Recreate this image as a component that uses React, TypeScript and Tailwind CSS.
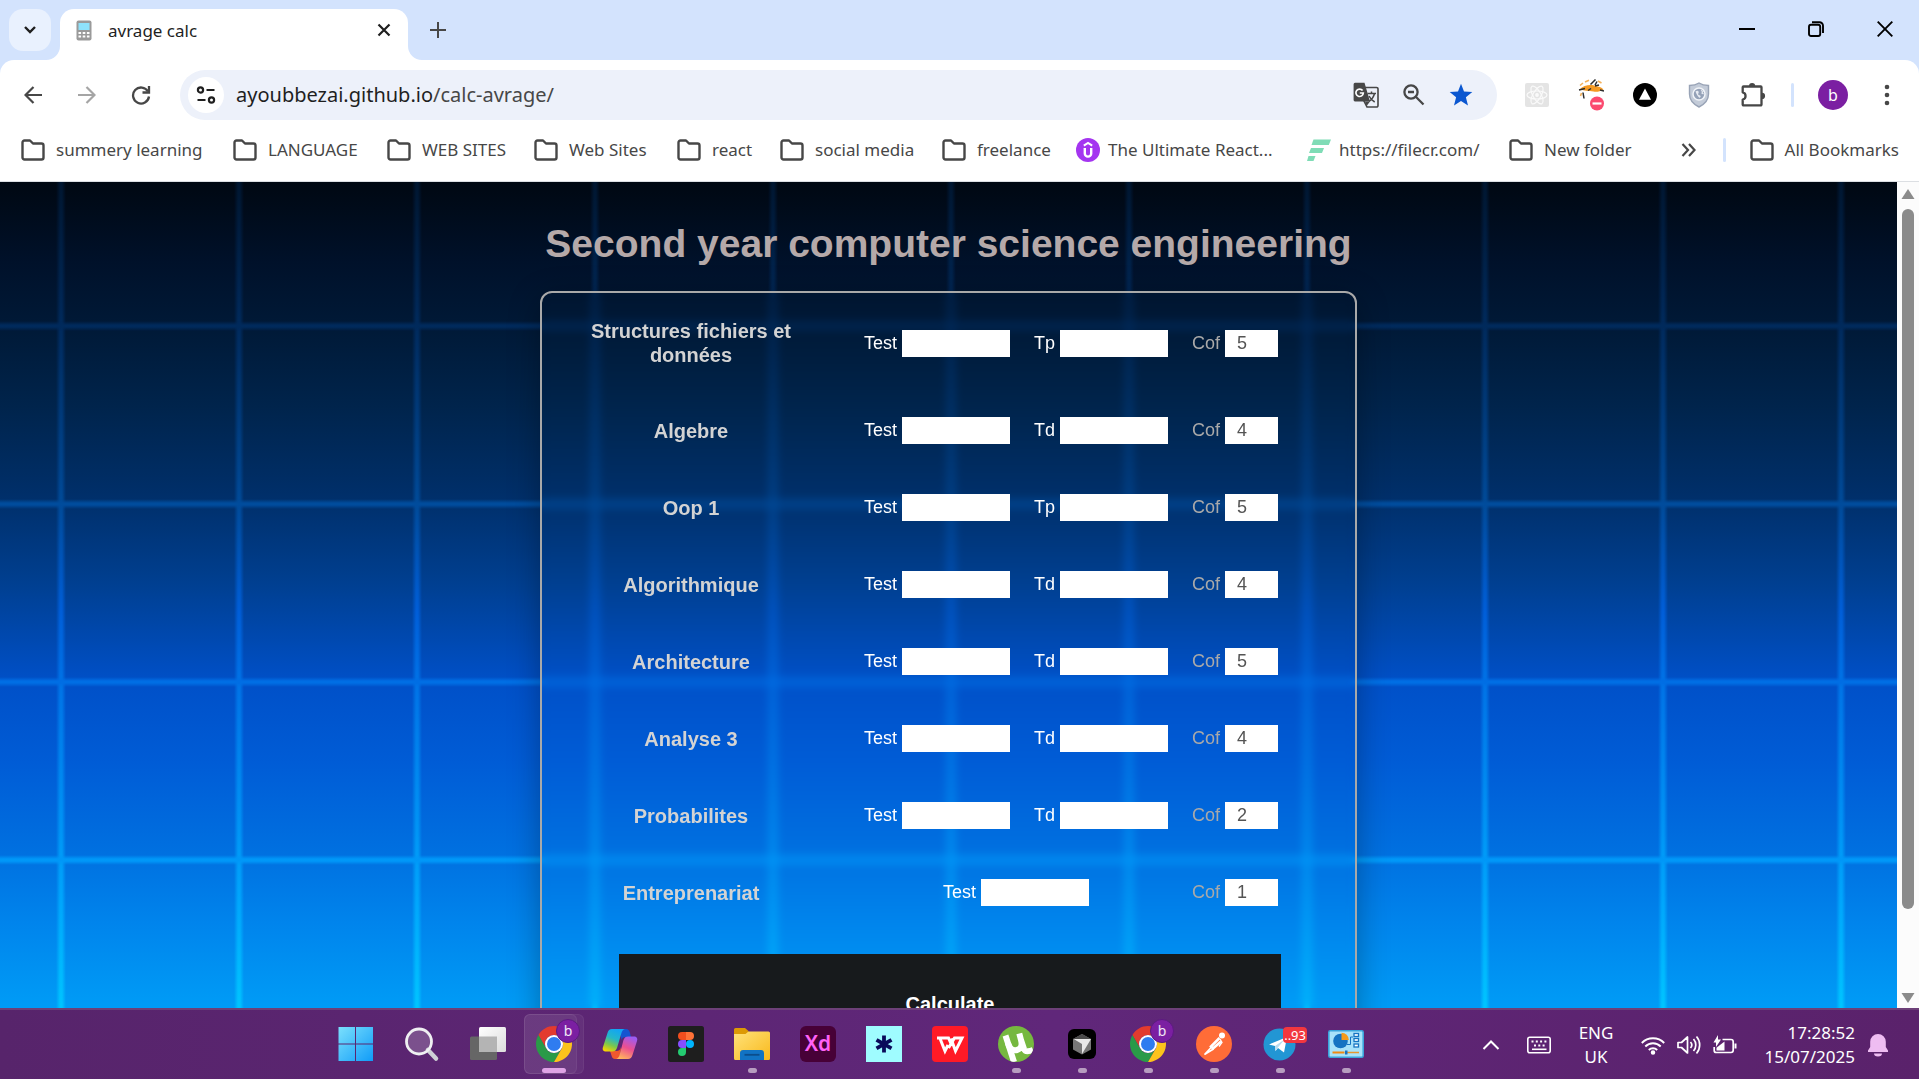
import type { ReactNode } from "react";

const chromeFont = "font-['Noto_Sans','Open_Sans',sans-serif]";

/* ---------- browser icons ---------- */

function Folder() {
  return (
    <svg viewBox="0 0 24 22" className="h-[22px] w-6 shrink-0" fill="none" stroke="#474747" strokeWidth="2.4" strokeLinejoin="round">
      <path d="M1.5 3.5a2 2 0 0 1 2-2H9l3 3h8.5a2 2 0 0 1 2 2v12a2 2 0 0 1-2 2h-17a2 2 0 0 1-2-2z" />
    </svg>
  );
}

function Uplift() {
  return (
    <svg viewBox="0 0 24 24" className="size-6 shrink-0">
      <circle cx="12" cy="12" r="12" fill="#a435f0" />
      <path d="M7.8 7.6 12 4.9l4.2 2.7" fill="none" stroke="#fff" strokeWidth="2" />
      <path d="M8.8 10v5.4a3.2 3.2 0 0 0 6.4 0V10" fill="none" stroke="#fff" strokeWidth="2.4" />
    </svg>
  );
}

function FilecrMark() {
  return (
    <svg viewBox="0 0 24 24" className="size-6 shrink-0" fill="#7fdcb6">
      <path d="M6.5 1.5H24l-2.200 5.500H4.500z" />
      <path d="M4 10h13l-2 5H2z" />
      <path d="M1.500 18H8.500l-2 5H0z" />
    </svg>
  );
}

function Translate() {
  return (
    <svg viewBox="0 0 26 26" className="size-[26px]">
      <path d="M11 5.500h12.500a1.500 1.500 0 0 1 1.500 1.500v16.500a1.500 1.500 0 0 1-1.500 1.500H14l-3-6z" fill="#edf1fa" stroke="#474747" strokeWidth="1.600" />
      <path d="M2 .8h9.500L17 19.500H2A1.500 1.500 0 0 1 .6 18V2.200A1.500 1.500 0 0 1 2 .8z" fill="#474747" />
      <path d="M12 19.500h5l-3.400 4.500z" fill="#474747" />
      <path d="M9.600 8.600A3.700 3.700 0 1 0 10.300 11H6.800" fill="none" stroke="#fff" strokeWidth="1.700" />
      <path d="M14.500 11.500h8.500M18.500 9.500v2M21.500 11.500c-.8 3.500-3 6.200-5.500 7.800M16 14c1.300 2.600 3.300 4.500 5.700 6" fill="none" stroke="#474747" strokeWidth="1.500" />
    </svg>
  );
}

function ZoomOut() {
  return (
    <svg viewBox="0 0 24 24" className="size-6" fill="none" stroke="#474747" strokeWidth="2.300">
      <circle cx="9" cy="9" r="6.600" />
      <path d="m13.800 13.800 7.700 7.700M6 9h6" />
    </svg>
  );
}

function Star() {
  return (
    <svg viewBox="0 0 24 24" className="size-6" fill="#0b57d0">
      <path d="m12 .8 3 7.700 8.300.5-6.400 5.300 2.100 8.100L12 17.900l-7 4.500 2.100-8.100L.7 9 9 8.500z" />
    </svg>
  );
}

function ReactBadge() {
  return (
    <svg viewBox="0 0 24 24" className="size-6">
      <rect width="24" height="24" rx="2" fill="#e4e4e4" />
      <g fill="none" stroke="#fafafa" strokeWidth="1.200">
        <ellipse cx="12" cy="12" rx="10" ry="4" />
        <ellipse cx="12" cy="12" rx="10" ry="4" transform="rotate(60 12 12)" />
        <ellipse cx="12" cy="12" rx="10" ry="4" transform="rotate(120 12 12)" />
      </g>
      <circle cx="12" cy="12" r="1.900" fill="#fafafa" />
    </svg>
  );
}

function BeeBlocker() {
  return (
    <svg viewBox="0 0 26 32" className="h-8 w-[26px]">
      <path d="M1.500 10.500c4-4.500 12-5.500 16-3.500 3 .5 6 1 8 3.500-4 2.500-7.500 2.500-10 2-5-.5-9-1-14-2z" fill="#f59a23" />
      <path d="M2 6.500 5 4M7 3l4-1.700M3.500 14l-1 3M20 2l3.500 2" stroke="#f3b15c" strokeWidth="1.600" />
      <path d="m12.500 5.500 5-5M17 6l2-3.500M1 11l6-1.500M10 11.500l3-2M5 13.500l1 6M17 7l4-1M22 11l4 1" stroke="#2d2d2d" strokeWidth="1.500" />
      <circle cx="19" cy="24.500" r="7" fill="#fb4a6f" />
      <path d="M14.500 24.500h9" stroke="#fff" strokeWidth="2.200" />
    </svg>
  );
}

function TriangleDisc() {
  return (
    <svg viewBox="0 0 24 24" className="size-6">
      <circle cx="12" cy="12" r="12" fill="#000" />
      <path d="M12 5.500 18 16.800H6z" fill="#fff" />
    </svg>
  );
}

function ShieldGlobe() {
  return (
    <svg viewBox="0 0 22 26" className="h-[26px] w-[22px]">
      <path d="M11 1C14 3 17 3.500 20.500 3.500V12c0 6-3.500 10-9.500 13C5 22 1.500 18 1.500 12V3.500C5 3.500 8 3 11 1z" fill="#c3cbd8" stroke="#98a3b6" strokeWidth="1.400" />
      <circle cx="11" cy="12" r="6" fill="#95a2b8" stroke="#f1f4f8" strokeWidth="1.500" />
      <path d="M7.500 9.500c2-2 4 0 3 1.500s0 2 1.500 2.500 0 3-1 2-2.500-3-3.500-6z" fill="#e7ebf2" />
      <path d="M13 8.500l2 1-1 1.500 1.500 1" stroke="#e7ebf2" strokeWidth="1.300" fill="none" />
    </svg>
  );
}

function Puzzle() {
  return (
    <svg viewBox="0 0 26 26" className="size-[26px]">
      <path d="M3.500 4.500h17.200a.8.8 0 0 1 .8.8v17.200a.8.800 0 0 1-.8.8H3.500a.8.8 0 0 1-.8-.8V17.500a3.700 3.700 0 0 0 0-7.200V5.300a.8.800 0 0 1 .8-.8z" fill="none" stroke="#474747" strokeWidth="2.300" strokeLinejoin="round" />
      <path d="M9 4a3.100 3.100 0 0 1 6.200 0zM22 10.800a3.100 3.100 0 0 1 0 6.200z" fill="#474747" />
    </svg>
  );
}

function CalculatorIcon() {
  return (
    <svg viewBox="0 0 16 21" className="h-[21px] w-4">
      <rect x=".5" y=".5" width="15" height="20" rx="2" fill="#9a9a9a" />
      <rect x="2.500" y="3" width="11" height="7" fill="#8ee2fb" />
      <g fill="#fff">
        <rect x="2.500" y="12" width="2.600" height="2" />
        <rect x="6.700" y="12" width="2.600" height="2" />
        <rect x="10.900" y="12" width="2.600" height="2" />
        <rect x="2.500" y="15.500" width="2.600" height="2" />
        <rect x="6.700" y="15.500" width="2.600" height="2" />
        <rect x="10.900" y="15.500" width="2.600" height="2" />
      </g>
    </svg>
  );
}

/* ---------- browser chrome ---------- */

function TabStrip() {
  return (
    <div className="flex h-[60px] items-end bg-[#d3e3fd] pl-[9px]">
      <button aria-label="Search tabs" className="mb-[9px] flex size-[42px] items-center justify-center rounded-[14px] bg-[#e9f1fe]">
        <svg viewBox="0 0 14 10" className="h-[10px] w-[14px]" fill="none" stroke="#1f1f1f" strokeWidth="2.400">
          <path d="m2 2 5 5 5-5" />
        </svg>
      </button>
      <div className="relative ml-[9px] flex h-[51px] w-[348px] items-center rounded-t-[14px] bg-white pr-3 pb-[9px] pl-4">
        <svg viewBox="0 0 14 14" className="absolute bottom-0 -left-[14px] size-[14px]" fill="#fff">
          <path d="M14 0v14H0A14 14 0 0 0 14 0z" />
        </svg>
        <svg viewBox="0 0 14 14" className="absolute -right-[14px] bottom-0 size-[14px]" fill="#fff">
          <path d="M0 0v14h14A14 14 0 0 1 0 0z" />
        </svg>
        <CalculatorIcon />
        <span className="ml-4 flex-1 pt-[2px] text-[17px] leading-6 text-[#1f1f1f]">avrage calc</span>
        <button aria-label="Close tab" className="flex size-6 items-center justify-center">
          <svg viewBox="0 0 14 14" className="size-[14px]" stroke="#1f1f1f" strokeWidth="2.200">
            <path d="m1.500 1.500 11 11m0-11-11 11" />
          </svg>
        </button>
      </div>
      <button aria-label="New tab" className="mb-[18px] ml-[18px] flex size-6 items-center justify-center">
        <svg viewBox="0 0 16 16" className="size-4" stroke="#474747" strokeWidth="2">
          <path d="M8 0v16M0 8h16" />
        </svg>
      </button>
      <div className="ml-auto flex self-start">
        <button aria-label="Minimize" className="flex h-[58px] w-[69px] items-center justify-center">
          <svg viewBox="0 0 16 16" className="size-4" stroke="#000" strokeWidth="2"><path d="M0 8h16" /></svg>
        </button>
        <button aria-label="Restore" className="flex h-[58px] w-[69px] items-center justify-center">
          <svg viewBox="0 0 16 16" className="size-4" fill="none" stroke="#000" strokeWidth="1.900">
            <rect x="1" y="3.800" width="11.200" height="11.200" rx="2" />
            <path d="M4 1.200h7.500a3.500 3.500 0 0 1 3.500 3.500V12" />
          </svg>
        </button>
        <button aria-label="Close" className="flex h-[58px] w-[69px] items-center justify-center">
          <svg viewBox="0 0 16 16" className="size-4" stroke="#000" strokeWidth="1.900"><path d="m.7.700 14.600 14.600m0-14.600L.7 15.300" /></svg>
        </button>
      </div>
    </div>
  );
}

const extensions: { name: string; icon: ReactNode }[] = [
  { name: "React Developer Tools", icon: <ReactBadge /> },
  { name: "Blocker", icon: <BeeBlocker /> },
  { name: "Toolbar", icon: <TriangleDisc /> },
  { name: "Guard", icon: <ShieldGlobe /> },
  { name: "Extensions", icon: <Puzzle /> },
];

function Toolbar() {
  return (
    <div className="bg-[#d3e3fd]">
      <div className="flex h-[68px] items-center rounded-t-[14px] bg-white pt-[2px] pl-[6px]">
        <button aria-label="Back" className="flex h-10 w-[54px] items-center justify-center">
          <svg viewBox="0 0 18 18" className="size-[18px]" fill="none" stroke="#474747" strokeWidth="2.200"><path d="M18 9H2M9.500 1 1.500 9l8 8" /></svg>
        </button>
        <button aria-label="Forward" disabled className="flex h-10 w-[54px] items-center justify-center">
          <svg viewBox="0 0 18 18" className="size-[18px]" fill="none" stroke="#a5a5a5" strokeWidth="2.200"><path d="M0 9h16M8.500 1l8 8-8 8" /></svg>
        </button>
        <button aria-label="Reload" className="flex h-10 w-[54px] items-center justify-center">
          <svg viewBox="0 0 20 20" className="size-5" fill="none" stroke="#474747" strokeWidth="2.300">
            <path d="M17 6.500A8 8 0 1 0 18 11.500" /><path d="M18 1v6.500h-6.500" />
          </svg>
        </button>
        <div className="ml-3 flex h-[50px] flex-1 items-center rounded-full bg-[#edf1fa] pr-6 pl-2">
          <button aria-label="View site information" className="flex size-9 shrink-0 items-center justify-center rounded-full bg-white">
            <svg viewBox="0 0 20 20" className="size-5" fill="none" stroke="#1f1f1f" strokeWidth="2.200">
              <circle cx="4.500" cy="5" r="2.600" /><path d="M10.500 5H18.500M1.500 15h8" /><circle cx="15.500" cy="15" r="2.600" />
            </svg>
          </button>
          <a href="#top" className="ml-3 flex-1 text-xl leading-6 text-[#1f1f1f]">
            ayoubbezai.github.io<span className="text-[#474747]">/calc-avrage/</span>
          </a>
          <div className="flex items-center gap-[23px]">
            <button aria-label="Translate"><Translate /></button>
            <button aria-label="Zoom"><ZoomOut /></button>
            <button aria-label="Bookmark"><Star /></button>
          </div>
        </div>
        <div className="ml-[13px] flex items-center">
          {extensions.map((e) => (
            <button key={e.name} aria-label={e.name} className="flex h-10 w-[54px] items-center justify-center">{e.icon}</button>
          ))}
        </div>
        <span className="ml-[11px] h-6 w-[3px] rounded bg-[#d3e3fd]" />
        <button aria-label="Profile" className="ml-6 flex size-[30px] items-center justify-center rounded-full bg-[#7b1fa2] text-base text-white">b</button>
        <button aria-label="Menu" className="mr-5 ml-[27px] flex h-10 w-6 items-center justify-center">
          <svg viewBox="0 0 6 22" className="h-[22px] w-[6px]" fill="#474747">
            <circle cx="3" cy="3" r="2.300" /><circle cx="3" cy="11" r="2.300" /><circle cx="3" cy="19" r="2.300" />
          </svg>
        </button>
      </div>
    </div>
  );
}

function Bookmark({ label, icon }: { label: string; icon?: ReactNode }) {
  return (
    <a href="#top" className={icon ? "flex items-center gap-2 whitespace-nowrap" : "flex items-center gap-[11px] whitespace-nowrap"}>
      {icon ?? <Folder />}
      <span>{label}</span>
    </a>
  );
}

function BookmarksBar() {
  return (
    <nav className="grid h-[54px] grid-cols-[212px_154px_147px_143px_103px_162px_134px_231px_202px_172px_1fr_auto] items-center border-b border-[#dcdfe3] bg-white pr-5 pb-[10px] pl-[21px] text-[17px] text-[#474747]">
      <Bookmark label="summery learning" />
      <Bookmark label="LANGUAGE" />
      <Bookmark label="WEB SITES" />
      <Bookmark label="Web Sites" />
      <Bookmark label="react" />
      <Bookmark label="social media" />
      <Bookmark label="freelance" />
      <Bookmark label="The Ultimate React..." icon={<Uplift />} />
      <Bookmark label="https://filecr.com/" icon={<FilecrMark />} />
      <Bookmark label="New folder" />
      <button aria-label="More bookmarks">
        <svg viewBox="0 0 15 14" className="h-[14px] w-[15px]" fill="none" stroke="#474747" strokeWidth="2.200">
          <path d="m1.500 1 5.500 6-5.500 6M8 1l5.500 6L8 13" />
        </svg>
      </button>
      <div className="flex items-center gap-6">
        <span className="h-6 w-[3px] rounded bg-[#d3e3fd]" />
        <Bookmark label="All Bookmarks" />
      </div>
    </nav>
  );
}

/* ---------- page ---------- */

const subjects = [
  { name: "Structures fichiers et données", fields: ["Test", "Tp"], cof: 5 },
  { name: "Algebre", fields: ["Test", "Td"], cof: 4 },
  { name: "Oop 1", fields: ["Test", "Tp"], cof: 5 },
  { name: "Algorithmique", fields: ["Test", "Td"], cof: 4 },
  { name: "Architecture", fields: ["Test", "Td"], cof: 5 },
  { name: "Analyse 3", fields: ["Test", "Td"], cof: 4 },
  { name: "Probabilites", fields: ["Test", "Td"], cof: 2 },
  { name: "Entreprenariat", fields: ["Test"], cof: 1 },
];

function GridBackdrop() {
  return (
    <div className="absolute inset-0 bg-[linear-gradient(180deg,#000812_0px,#00112a_80px,#001a38_150px,#00244c_225px,#00306c_320px,#003f90_400px,#0050c8_500px,#005cd6_580px,#0070e0_670px,#0084ec_740px,#009cf6_826px)]">
      <div className="absolute inset-0 bg-[linear-gradient(180deg,#001630_0px,#002a5c_145px,#004a98_322px,#005ed8_430px,#0072e6_500px,#0092f4_640px,#00a6fc_720px,#00c4ff_826px)] [mask-image:repeating-linear-gradient(90deg,transparent_0px,transparent_56px,#000_60px,#000_62px,transparent_66px,transparent_178px)]" />
      <div className="absolute inset-0 bg-[linear-gradient(180deg,#001630_0px,#002a5c_145px,#004c9c_322px,#005ed8_430px,#006ee4_500px,#0098f8_680px,#00c4ff_826px)] [mask-image:repeating-linear-gradient(180deg,transparent_0px,transparent_139px,#000_143px,#000_145px,transparent_149px,transparent_178px)]" />
    </div>
  );
}

function SubjectRow({ subject }: { subject: (typeof subjects)[number] }) {
  return (
    <div className="grid grid-cols-[298px_352px_86px] items-center py-[25px] text-lg leading-[27px] text-white">
      <h2 className="mx-auto max-w-[220px] text-center text-xl leading-6 font-bold text-[#d3d3d3]">{subject.name}</h2>
      <div className="flex justify-center gap-6">
        {subject.fields.map((f) => (
          <label key={f} className="flex items-center gap-[5px]">
            {f}
            <input type="text" inputMode="decimal" className="h-[27px] w-[108px] bg-white px-3 text-[#545454]" />
          </label>
        ))}
      </div>
      <label className="flex items-center gap-[5px] text-[#a9a9a9]">
        Cof
        <input type="text" readOnly defaultValue={subject.cof} className="h-[27px] w-[53px] bg-white pl-3 text-[#545454]" />
      </label>
    </div>
  );
}

function Page() {
  return (
    <div id="top" className="flex min-h-0 flex-1 bg-[#fcfcfc] font-['Liberation_Sans',Arial,sans-serif]">
      <main className="relative flex-1 overflow-hidden">
        <GridBackdrop />
        <div className="relative flex flex-col items-center pt-[39px]">
          <h1 className="mb-6 text-[39px] leading-[46px] font-bold text-[#b5a9a9]">Second year computer science engineering</h1>
          <form className="w-full max-w-[817px] rounded-xl border-2 border-[#a9a9a9] pt-px shadow-[0_8px_32px_rgba(0,0,0,0.3)] backdrop-blur-[5px]">
            {subjects.map((s) => (
              <SubjectRow key={s.name} subject={s} />
            ))}
            <button type="button" className="mt-[23px] mb-12 ml-[77px] h-[100px] w-[662px] bg-[#171a1c] text-xl font-bold text-white">Calculate</button>
          </form>
        </div>
      </main>
      <div className="flex w-[22px] flex-col items-center">
        <svg viewBox="0 0 14 27" className="h-[27px] w-[14px] shrink-0" fill="#8b8b8b"><path d="M7 7 13.500 17H.5z" /></svg>
        <div className="w-3 flex-[699] rounded-full bg-[#8b8b8b]" />
        <div className="flex-[72]" />
        <svg viewBox="0 0 14 27" className="h-[27px] w-[14px] shrink-0" fill="#8b8b8b"><path d="M7 22 .5 12h13z" /></svg>
      </div>
    </div>
  );
}

/* ---------- taskbar ---------- */

function Windows() {
  return (
    <svg viewBox="0 0 36 36" className="size-9">
      <defs>
        <linearGradient id="win" x1="0" y1="0" x2="1" y2="1"><stop offset="0" stopColor="#7be0fd" /><stop offset="1" stopColor="#109cf8" /></linearGradient>
      </defs>
      <path d="M.5 1H17v16.500H.5zM18 1h17v16.500H18zM.5 18.500H17V35H.5zM18 18.500h17V35H18z" fill="url(#win)" />
    </svg>
  );
}

function Search() {
  return (
    <svg viewBox="0 0 36 36" className="size-9" fill="none">
      <path d="m24 24 8 8.500" stroke="#cfd0d6" strokeWidth="4.500" strokeLinecap="round" />
      <circle cx="15" cy="15.500" r="12.500" fill="#fff" fillOpacity=".2" stroke="#efeff2" strokeWidth="2.800" />
    </svg>
  );
}

function TaskView() {
  return (
    <svg viewBox="0 0 36 36" className="size-9">
      <defs>
        <linearGradient id="tv" x1="0" y1="0" x2="1" y2="1"><stop offset="0" stopColor="#fff" /><stop offset="1" stopColor="#dcdcdc" /></linearGradient>
      </defs>
      <rect x="0" y="10.500" width="27" height="23.500" rx="1.500" fill="#666" />
      <rect x="9" y="1" width="27" height="25" rx="1.500" fill="url(#tv)" />
      <path d="M9 10.500h18V26H10.500A1.500 1.500 0 0 1 9 24.500z" fill="#b4b4b4" />
    </svg>
  );
}

function Chrome() {
  return (
    <span className="relative">
      <svg viewBox="0 0 48 48" className="size-9">
        <path d="M3.220 12A24 24 0 0 1 44.780 12H24A12 12 0 0 0 13.600 30z" fill="#e33b2e" />
        <path d="M3.220 12 13.600 30A12 12 0 0 0 34.400 30L24 48A24 24 0 0 1 3.220 12z" fill="#2a9a48" />
        <path d="M44.780 12A24 24 0 0 1 24 48L34.400 30A12 12 0 0 0 24 12z" fill="#fcc31c" />
        <circle cx="24" cy="24" r="12" fill="#fff" />
        <circle cx="24" cy="24" r="9.300" fill="#2f7cf0" />
      </svg>
      <span className="absolute -top-[7px] -right-[8px] flex size-6 items-center justify-center rounded-full border border-[#5c1a80] bg-[#7b1fa2] text-sm text-white/90">b</span>
    </span>
  );
}

function Copilot() {
  return (
    <svg viewBox="0 0 36 36" className="size-9">
      <defs>
        <linearGradient id="cpA" x1=".6" y1="0" x2=".2" y2="1"><stop offset="0" stopColor="#12a5f4" /><stop offset=".4" stopColor="#25b7c8" /><stop offset=".7" stopColor="#7cc84c" /><stop offset="1" stopColor="#fbd400" /></linearGradient>
        <linearGradient id="cpB" x1=".7" y1="0" x2=".3" y2="1"><stop offset="0" stopColor="#9a5cf5" /><stop offset=".5" stopColor="#ec4f8f" /><stop offset="1" stopColor="#ffb45e" /></linearGradient>
      </defs>
      <path d="M18 3h6c2.500 0 3.500 2 4 4l1 4h-5c-3 0-4 1-4.700 3z" fill="#1454d0" />
      <path d="M18 33h-5c-2 0-3-1.500-3.500-3.500L8 25h6c3 0 4-1 5-4z" fill="#f0582e" />
      <path d="M10 3h13c-2 .5-3 2-3.700 4.500L15 22c-1 2.500-2 3.500-5 3.500H4C1.500 25.500 0 24 1 21L5.500 7C6.300 4.500 7.500 3 10 3z" fill="url(#cpA)" />
      <path d="M26 33H14c2-.5 3-2 3.700-4.500L21.500 14c1-2.500 2-3.500 5-3.500H32c2.500 0 4 2 3 4.500L30.500 29c-.8 2.500-2 4-4.500 4z" fill="url(#cpB)" />
    </svg>
  );
}

function Figma() {
  return (
    <svg viewBox="0 0 36 36" className="size-9">
      <rect width="36" height="36" rx="2.500" fill="#1e1e1e" />
      <path d="M18 6h-4a4 4 0 0 0 0 8h4z" fill="#f24e1e" />
      <path d="M18 6h4a4 4 0 0 1 0 8h-4z" fill="#ff7237" />
      <path d="M18 14h-4a4 4 0 0 0 0 8h4z" fill="#874fff" />
      <circle cx="22" cy="18" r="4" fill="#00b6ff" />
      <path d="M18 22h-4a4 4 0 1 0 4 4z" fill="#24cb71" />
    </svg>
  );
}

function Explorer() {
  return (
    <svg viewBox="0 0 36 36" className="size-9">
      <defs>
        <linearGradient id="ex" x1="0" y1="0" x2="1" y2="1"><stop offset="0" stopColor="#ffe27a" /><stop offset="1" stopColor="#f9b91c" /></linearGradient>
      </defs>
      <path d="M0 3.500A1.500 1.500 0 0 1 1.500 2H11l3.500 3v5H0z" fill="#dd9a05" />
      <path d="M0 8h11.500l3-2.500H34.500A1.500 1.500 0 0 1 36 7v25.500A1.500 1.500 0 0 1 34.500 34h-33A1.500 1.500 0 0 1 0 32.500z" fill="url(#ex)" />
      <path d="M6 34v-7a3 3 0 0 1 3-3h18a3 3 0 0 1 3 3v7z" fill="#1173c4" />
      <path d="M10.500 28.800h15" stroke="#0b4d8c" strokeWidth="1.800" />
    </svg>
  );
}

function AdobeXd() {
  return <span className="flex size-9 items-center justify-center rounded-md bg-[#470137] text-[21px] font-semibold text-[#ff61f6]">Xd</span>;
}

function Asterisk() {
  return (
    <svg viewBox="0 0 36 36" className="size-9">
      <path d="M0 0h36v36H0z" fill="#9ffcff" />
      <path d="M18 9.500v17M10.500 13.800l15 8.600M25.500 13.800l-15 8.600" stroke="#0a0a5a" strokeWidth="3.800" />
    </svg>
  );
}

function Wps() {
  return (
    <svg viewBox="0 0 36 36" className="size-9">
      <rect width="36" height="36" rx="4" fill="#ff1a26" />
      <path d="M5 12h11.500l3.500 8M8 12.500l5 12.500 3-6M19 12.500l4.500 12.500 6.500-13h-7.500l-6 10" fill="none" stroke="#fff" strokeWidth="3" />
    </svg>
  );
}

function Torrent() {
  return (
    <svg viewBox="0 0 36 36" className="size-9">
      <defs>
        <clipPath id="torrentDisc"><circle cx="18" cy="18" r="18" /></clipPath>
      </defs>
      <circle cx="18" cy="18" r="18" fill="#76b83f" />
      <g clipPath="url(#torrentDisc)" fill="none" stroke="#fff" strokeWidth="6">
        <path d="M7.500 9.500 16 36" />
        <path d="M10 17c1.500 6 5 8 9 7s5.500-4.500 4-10l-1.700-6.500M23 14l3 9c1 2.500 4 3 9 1" />
      </g>
    </svg>
  );
}

function Cursor() {
  return (
    <svg viewBox="0 0 36 36" className="size-9">
      <rect x="4" y="3" width="28" height="30" rx="6" fill="#000" />
      <path d="m18 8 9 5v10.500L18 28.500 9 23.500V13z" fill="#777" />
      <path d="m18 8 9 5-9 4.500L9 13z" fill="#4a4a4a" />
      <path d="M9.500 13H27l-9 15v-10z" fill="#e8e8e8" />
    </svg>
  );
}

function Postman() {
  return (
    <svg viewBox="0 0 36 36" className="size-9" fill="none">
      <circle cx="18" cy="18" r="18" fill="#ff6c37" />
      <circle cx="26" cy="9.500" r="3" fill="#fff" />
      <path d="m23.500 12-8.500 8.500 2 2 8-7" stroke="#fff" strokeWidth="2.600" />
      <path d="m16 20.500-7.500 8 9-5.500" stroke="#fff" strokeWidth="1.600" />
      <path d="m24 13 2 3.500-3 4" stroke="#fff" strokeWidth="1.300" />
    </svg>
  );
}

function Telegram() {
  return (
    <span className="relative">
      <svg viewBox="0 0 36 36" className="size-9">
        <circle cx="17.500" cy="18.500" r="16" fill="#2296d4" />
        <path d="M7 18.500 25 11l-3 15.500-6-4.500-2.500 3-.5-5z" fill="#fff" />
        <path d="m13 20 9.500-6.500L15.500 22l-2 3z" fill="#b8dcf0" />
      </svg>
      <span className="absolute top-px -right-[9px] rounded bg-[#f2373f] px-px text-[13px] leading-4 text-white">..93</span>
    </span>
  );
}

function ControlPanel() {
  return (
    <svg viewBox="0 0 36 36" className="size-9">
      <rect x=".8" y="4.800" width="34.400" height="26.400" rx="1.500" fill="#a9e2fa" stroke="#3aa4dc" strokeWidth="1.600" />
      <circle cx="12.500" cy="15" r="7.300" fill="#1673c2" />
      <path d="M12.500 15V7.700A7.300 7.300 0 0 1 19.800 15z" fill="#f59a1b" transform="translate(1 -1)" />
      <g fill="#fff" stroke="#1673c2" strokeWidth="1.300"><rect x="26" y="7.500" width="4.500" height="3" /><rect x="26" y="12.500" width="4.500" height="3" /><rect x="26" y="18" width="4.500" height="3" /></g>
      <path d="M19 18.500h3.500V11H25" fill="none" stroke="#1673c2" />
      <path d="M4.500 26.500h12" stroke="#f08a12" strokeWidth="2" /><path d="M18 26.500h13" stroke="#e7962e" strokeWidth="1.500" />
      <rect x="17" y="24.500" width="2.500" height="4" fill="#1673c2" />
    </svg>
  );
}

const apps: { name: string; icon: ReactNode; running?: boolean; active?: boolean }[] = [
  { name: "Start", icon: <Windows /> },
  { name: "Search", icon: <Search /> },
  { name: "Task view", icon: <TaskView /> },
  { name: "Chrome", icon: <Chrome />, active: true },
  { name: "Copilot", icon: <Copilot /> },
  { name: "Figma", icon: <Figma /> },
  { name: "File Explorer", icon: <Explorer />, running: true },
  { name: "Adobe Xd", icon: <AdobeXd /> },
  { name: "Notes", icon: <Asterisk /> },
  { name: "WPS Office", icon: <Wps /> },
  { name: "Torrent", icon: <Torrent />, running: true },
  { name: "Cursor", icon: <Cursor />, running: true },
  { name: "Chrome profile", icon: <Chrome />, running: true },
  { name: "Postman", icon: <Postman />, running: true },
  { name: "Telegram", icon: <Telegram />, running: true },
  { name: "Control Panel", icon: <ControlPanel />, running: true },
];

function Taskbar() {
  return (
    <footer className="flex h-[71px] shrink-0 items-center border-t-2 border-[#6d4078] bg-[linear-gradient(90deg,#57246b,#60277a_55%,#5a226b)] pl-[323px] text-white">
      {apps.map((a) => (
        <button key={a.name} aria-label={a.name} className="relative flex h-[69px] w-[66px] items-center justify-center pb-px">
          {a.active && <span className="absolute top-1 left-[3px] h-[60px] w-[60px] rounded-md border border-white/5 bg-white/5" />}
          {a.active && <span className="absolute top-1 left-[3px] h-[60px] w-[53px] rounded-md border border-white/5 bg-white/5" />}
          {a.icon}
          {a.active && <span className="absolute bottom-[6px] h-[5px] w-6 rounded-full bg-[#dfa3e6]" />}
          {a.running && <span className="absolute bottom-[6px] h-[5px] w-[9px] rounded-full bg-[#b79cc0]" />}
        </button>
      ))}
      <div className="ml-auto flex items-center pr-[31px] text-[17px] leading-6">
        <button aria-label="Show hidden icons" className="mr-[27px]">
          <svg viewBox="0 0 18 18" className="size-[18px]" fill="none" stroke="#fff" strokeWidth="2"><path d="m1.500 13 7.500-7.500 7.500 7.500" /></svg>
        </button>
        <button aria-label="Touch keyboard" className="mr-[27px]">
          <svg viewBox="0 0 24 18" className="h-[18px] w-6" fill="none" stroke="#fff" strokeWidth="1.600">
            <rect x=".8" y="1.300" width="22.400" height="15.400" rx="2" />
            <path d="M4.500 5.500h15" strokeDasharray="2 2.300" strokeWidth="2" /><path d="M7 9.500h11" strokeDasharray="2 2.300" strokeWidth="2" /><path d="M5 13.300h14.500" />
          </svg>
        </button>
        <button className="w-9 text-center">ENG<br />UK</button>
        <button aria-label="Network, volume, battery" className="ml-[27px] flex items-center gap-3">
          <svg viewBox="0 0 24 20" className="h-5 w-6" fill="none" stroke="#fff" strokeWidth="1.900">
            <path d="M.8 8a15.500 15.500 0 0 1 22.400 0" /><path d="M4.300 11.500a10.800 10.800 0 0 1 15.400 0" /><path d="M7.800 15a6 6 0 0 1 8.400 0" /><circle cx="12" cy="17.500" r="1.300" fill="#fff" />
          </svg>
          <svg viewBox="0 0 24 20" className="h-5 w-6" fill="none" stroke="#fff" strokeWidth="1.700">
            <path d="M1 7.500h3.500l6-5.500v16l-6-5.500H1z" strokeLinejoin="round" /><path d="M13.500 7a4.500 4.500 0 0 1 0 6M16.500 4a9 9 0 0 1 0 12M19.500 1.500a13 13 0 0 1 0 17" />
          </svg>
          <svg viewBox="0 0 24 20" className="h-5 w-6" fill="none" stroke="#fff" strokeWidth="1.700">
            <path d="M9.500 4.500H18a2.200 2.200 0 0 1 2.200 2.200v8.600a2.200 2.200 0 0 1-2.200 2.200H3.200a2 2 0 0 1-2-2V12" />
            <path d="M22.500 8.500v5" strokeWidth="2" /><path d="M3.500 15.500v-2.700L11.500 6.500v9z" fill="#fff" stroke="none" /><path d="M5 0v4.500h3L3 12V7.500H.5z" fill="#fff" stroke="none" />
          </svg>
        </button>
        <button className="w-[118px] text-right">17:28:52<br />15/07/2025</button>
        <button aria-label="Notifications" className="ml-[13px]">
          <svg viewBox="0 0 20 24" className="h-6 w-5" fill="#efbdf2">
            <path d="M10 1a7.800 7.800 0 0 1 7.800 7.800V14l2.200 3.500v1.500H0v-1.500L2.200 14V8.800A7.800 7.800 0 0 1 10 1z" /><path d="M6 20.500h8a4 3 0 0 1-8 0z" />
          </svg>
        </button>
      </div>
    </footer>
  );
}

export default function App() {
  return (
    <div className={`flex h-screen flex-col overflow-hidden ${chromeFont}`}>
      <header>
        <TabStrip />
        <Toolbar />
        <BookmarksBar />
      </header>
      <Page />
      <Taskbar />
    </div>
  );
}
